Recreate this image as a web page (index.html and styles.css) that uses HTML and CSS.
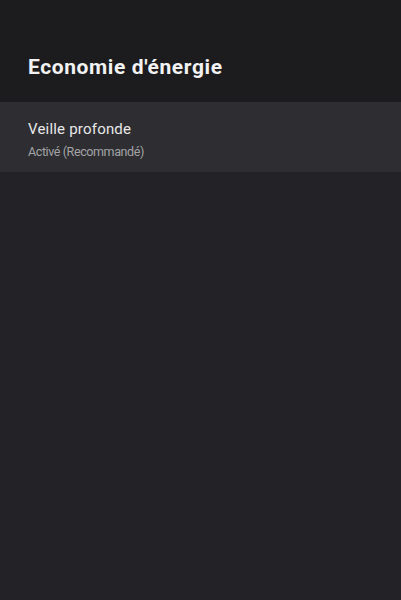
FILE: index.html
```html
<!DOCTYPE html>
<html lang="fr">
<head>
    <meta charset="UTF-8">
    <title>Economie d'énergie</title>
    <link rel="stylesheet" href="styles.css">
</head>
<body>
<div id="screen">
    <div class="header">
        <h1 class="title">Economie d'énergie</h1>
    </div>
    <ul class="list">
        <li class="item focused">
            <div class="item-title">Veille profonde</div>
            <div class="item-sub">Activé (Recommandé)</div>
        </li>
    </ul>
</div>
</body>
</html>
```

FILE: styles.css
```css
*{
    margin: 0;padding: 0;
}
ul,li{list-style: none}
html,body{height: 100%}
body{
    background: #232226;
    font-family: Roboto, "Noto Sans", sans-serif;
    color: #ececec;
}
#screen{
    min-height: 100%;
    background: #232226;
}
.header{
    height: 102px;
    box-sizing: border-box;
    padding: 55px 28px 0;
    background: #1c1c1e;
}
.title{
    font-size: 21px;
    line-height: 24px;
    font-weight: 700;
    letter-spacing: 0.6px;
    color: #f2f2f2;
}
.item{
    height: 70px;
    box-sizing: border-box;
    padding: 17px 28px 0;
}
.focused{
    background: #2e2e32;
}
.item-title{
    font-size: 15px;
    line-height: 20px;
    letter-spacing: 0.2px;
    color: #e8e8e8;
}
.item-sub{
    margin-top: 5px;
    font-size: 12.5px;
    line-height: 16px;
    letter-spacing: -0.4px;
    color: #a3a3a6;
}
```
